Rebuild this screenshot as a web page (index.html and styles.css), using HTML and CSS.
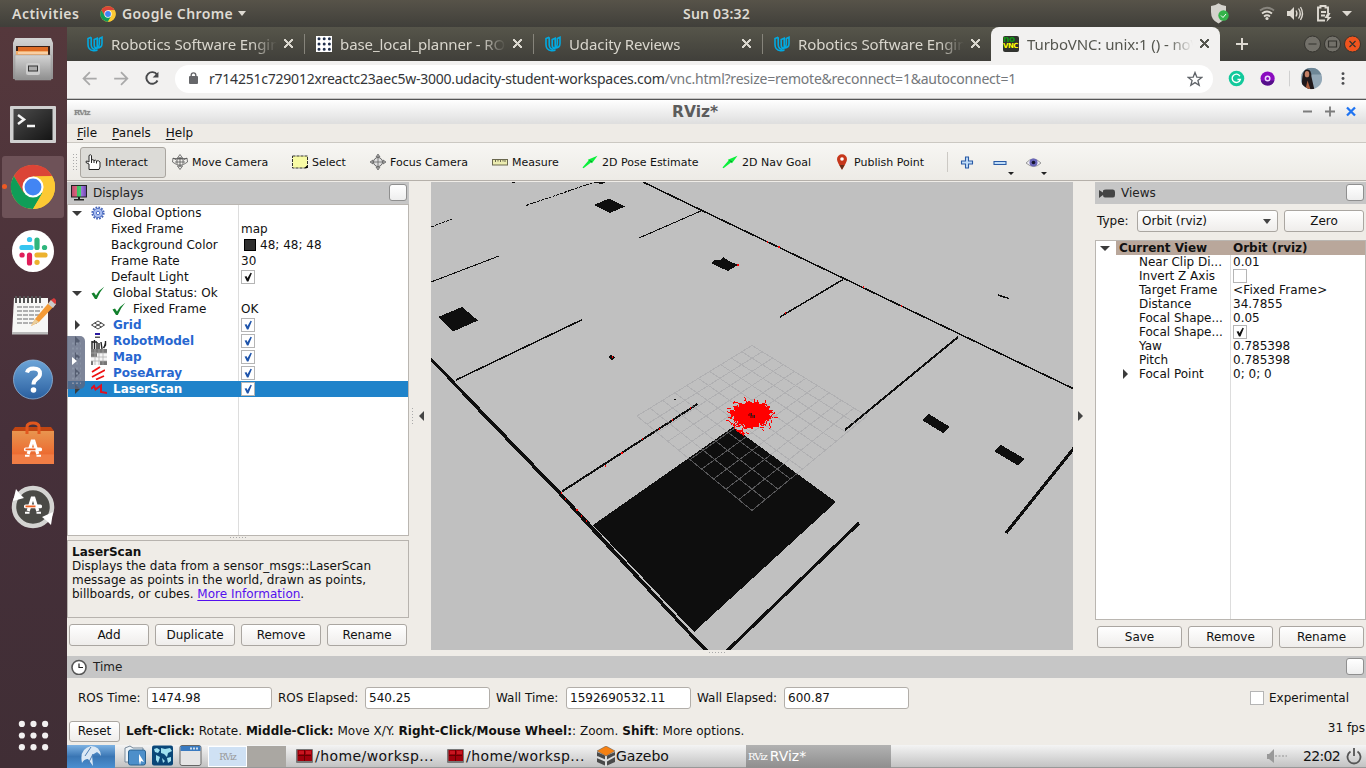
FILE: index.html
```html
<!DOCTYPE html>
<html lang="en">
<head>
<meta charset="utf-8">
<title>TurboVNC: unix:1 () - noVNC</title>
<link rel="stylesheet" href="styles.css">
</head>
<body>
<svg width="0" height="0" class="defs">
  <defs>
    <linearGradient id="steel" x1="0" y1="0" x2="0" y2="1"><stop offset="0" stop-color="#d4d4d4"/><stop offset="1" stop-color="#8e8e8e"/></linearGradient>
    <linearGradient id="orange" x1="0" y1="0" x2="0" y2="1"><stop offset="0" stop-color="#e8954f"/><stop offset=".7" stop-color="#ec6b31"/><stop offset=".72" stop-color="#f07d45"/></linearGradient>
    <linearGradient id="help" x1="0" y1="0" x2="0" y2="1"><stop offset="0" stop-color="#6da5d8"/><stop offset="1" stop-color="#2a5f9f"/></linearGradient>
    <linearGradient id="term" x1="0" y1="0" x2="1" y2="1"><stop offset="0" stop-color="#4c4c4c"/><stop offset="1" stop-color="#141414"/></linearGradient>
    <linearGradient id="rgb"><stop offset="0" stop-color="#b44c6c"/><stop offset=".33" stop-color="#e0607c"/><stop offset=".36" stop-color="#35c060"/><stop offset=".64" stop-color="#48d070"/><stop offset=".67" stop-color="#a070e0"/><stop offset="1" stop-color="#6a48a8"/></linearGradient>
    <symbol id="chrome" viewBox="0 0 48 48">
      <circle cx="24" cy="24" r="23" fill="#fcc934"/>
      <path d="M4 12.5A23 23 0 0 1 44 12.5L24 13 14 30Z" fill="#db4437"/>
      <path d="M4 12.5A23 23 0 0 0 24 47L34 30 24 33 14 29.500Z" fill="#0f9d58"/>
      <path d="M24 13H44.200A23 23 0 0 1 24 47L34 30Z" fill="#fcc934"/>
      <circle cx="24" cy="24" r="11" fill="#fff"/><circle cx="24" cy="24" r="8.800" fill="#4285f4"/>
    </symbol>
    <symbol id="udacity" viewBox="0 0 16 16">
      <path d="M4.200 1.300 1 2.600V8.500Q1 14 6.500 14.800 9.500 15 10.500 13.500M4.200 1.300V9Q4.500 13 8.500 13.500M10.200 2.300 7.200 3.500V9Q7.200 12 9.700 12.200 15 12 15 7.500V1.300L12.300 2.500V8Q12.300 10.500 10.200 11.500Z" fill="none" stroke="#02a9e0" stroke-width="1.600"/>
    </symbol>
    <symbol id="check" viewBox="0 0 14 14"><path d="M3 6.500 5.500 6.100 6.300 8.500 10 2 11.500 2.500 7.500 12.200H5.800Z" fill="currentColor"/></symbol>
    <symbol id="tick" viewBox="0 0 14 14"><path d="M.5 7.500 3 6.500 5 9.500Q8 4 13.200.8 8.500 6 5.800 13H4Z" fill="#12802c"/></symbol>
    <symbol id="camera" viewBox="0 0 16 16"><path d="M8 .5 10.500 4H5.500ZM8 15.500 5.500 12h5ZM.5 8 1 4l3.500 2M15.500 8 15 4l-3.500 2M.5 8 4.500 10.500M15.500 8 11.500 10.500M5 5h6v6H5zM1 4.500h14M3 8h10M8 3v10" fill="none" stroke="#555" stroke-width=".8"/></symbol>
    <symbol id="focus" viewBox="0 0 16 16"><circle cx="8" cy="8" r="4.500" fill="#ddd" stroke="#666"/><path d="M8 0 10 3H6ZM8 16 6 13h4ZM0 8 3 6v4ZM16 8 13 6v4ZM4 8h8M8 4v8" fill="#aaa" stroke="#666" stroke-width=".8"/></symbol>
    <symbol id="arrow" viewBox="0 0 16 14"><path d="M.5 12.500 6.500 5.500 5.800 4.800 15.500.8 10 8.300 9 7.500 1.500 13.200Z" fill="#0cf03c"/><path d="M7.500 5.500 10 7" stroke="#0a8428" stroke-width="1"/></symbol>
    <symbol id="term16" viewBox="0 0 18 15"><rect width="17" height="14" rx="1" fill="#777"/><rect x="1.500" y="1" width="14.500" height="11" fill="#a0000c"/><path d="M2 6.500h13M8.500 1v11" stroke="#600" stroke-width="1"/><path d="M3 2h5v3H3zM10 2h5v3h-5z" fill="#c81620"/></symbol>
    <symbol id="bag" viewBox="0 0 18 18"><path d="M4.200 15 8.200 2H9.800L13.800 15" fill="none" stroke="#fff" stroke-width="3.200"/><rect x="0" y="8.500" width="18" height="3.800" rx="1.600" fill="#fff"/><rect x="1.500" y="9.500" width="10" height="1.800" fill="#ee5f20"/><path d="M1 16.800h4.500M12.500 16.800h4.500" stroke="#fff" stroke-width="2"/></symbol>
  </defs>
</svg>

<div class="desktop">
  <header class="topbar">
    <span class="activities">Activities</span>
    <svg class="i16"><use href="#chrome"/></svg>
    <span class="appname">Google Chrome</span>
    <i class="caret light"></i>
    <span class="clock">Sun 03:32</span>
    <svg class="tray" viewBox="0 0 160 27">
      <path d="M16 6Q20 6 23.500 3.300 27 6 31 6V12Q31 20 23.500 23.500 16 20 16 12Z" fill="#d4d2cc"/>
      <circle cx="28.500" cy="15.500" r="5.200" fill="#35b34a"/><path d="M26 15.500 28 17.500 31 14" fill="none" stroke="#fff"/>
      <g fill="none" stroke="#dedad2" stroke-width="1.800"><path d="M65 10.500Q72 5 79 10.500" stroke="#88857e"/><path d="M67 13.500Q72 9.500 77 13.500M69 16.500Q72 14 75 16.500"/></g><circle cx="72" cy="18.500" r="1.600" fill="#dedad2"/>
      <path d="M92 11h3l4-4v13l-4-4h-3Z" fill="#dedad2"/><path d="M101 10.500q2 3 0 6M103.500 8.500q3.500 5 0 10M105.500 7q4 6.500 0 13" fill="none" stroke="#dedad2" stroke-width="1.300"/>
      <path d="M130 20.500h-7V7.500h2.500V6h5v1.500h2.500V13M126 12h5M126 15.500h4" fill="none" stroke="#dedad2" stroke-width="1.900"/><path d="m132.500 13-3 5h3l-1 4 5-5h-3l2-4Z" fill="#dedad2"/>
      <path d="M147 11h10l-5 5.200Z" fill="#dedad2"/>
    </svg>
  </header>

  <nav class="dock">
    <svg class="dk" viewBox="0 0 46 48"><path d="M5 3H41L43 8V44H3V8Z" fill="url(#steel)"/><path d="M6 11H40V22H6Z" fill="#3b2118"/><path d="M8 12h30v9H8z" fill="#de6b25"/><path d="M6 16h32v5H6z" fill="#f2ad6c"/><path d="M8 18h30" stroke="#fff1dc"/><path d="M5 20H41V45H5Z" fill="url(#steel)" stroke="#999" stroke-width=".5"/><rect x="16" y="28" width="14" height="12" rx="2" fill="#ccc"/><rect x="18.500" y="31" width="9" height="5" fill="#aaa" stroke="#333"/></svg>
    <svg class="dk" viewBox="0 0 46 48"><rect y="7" width="46" height="37" rx="1" fill="#d0d0d0"/><rect x="3.500" y="10" width="39" height="31" fill="url(#term)"/><path d="m8 16 6 4.500-6 4.500M17 27h8" fill="none" stroke="#f5f5f5" stroke-width="2.500"/></svg>
    <div class="dock-active"><svg class="dk" viewBox="0 0 46 48"><use href="#chrome" x="0" y="1" width="46" height="46"/></svg><i class="running"></i></div>
    <svg class="dk" viewBox="0 0 46 48"><circle cx="23" cy="24" r="21" fill="#fff"/><g fill="none" stroke-width="5.200" stroke-linecap="round"><path d="M12 20.500h9M19.500 12.500h.1" stroke="#36c5f0"/><path d="M27 13v7.500M34.500 20.500h.1" stroke="#2eb67d"/><path d="M27 28h8M27 35.300h.1" stroke="#ecb22e"/><path d="M19.500 28v8M12 28h.1" stroke="#e01e5a"/></g></svg>
    <svg class="dk" viewBox="0 0 46 48"><path d="M4 7 38 7 38 43H2Z" fill="#f7f7f5"/><path d="M2 41h36v2.500H2Z" fill="#bbb"/><path d="M7 16h26M7 20h23M7 24h24M7 28h18M7 32h20" stroke="#999" stroke-width="1.300" stroke-dasharray="5 1"/><path d="M6 5v7M10 5v7M14 5v7M18 5v7M22 5v7M26 5v7M30 5v7" stroke="#555" stroke-width="2"/><path d="M21 35 25 28 41 9 46 13 29 31Z" fill="#f39a35"/><path d="m38 13 3-4 5 4-3 4Z" fill="#ccc"/><path d="m41 9 3-2 3 3-2 3Z" fill="#dd3c3c"/><path d="m21 35 4-7 4 3Z" fill="#ebcf9c"/></svg>
    <svg class="dk" viewBox="0 0 46 48"><circle cx="23" cy="24.500" r="19.500" fill="url(#help)" stroke="#8fb4d8" stroke-width=".8"/><path d="M17 17.500q1-4 6.500-4 6.500 0 6.500 5.200 0 3-3.500 5.300Q23.500 26 23.500 29.500" fill="none" stroke="#fff" stroke-width="4"/><circle cx="23.500" cy="35" r="2.800" fill="#fff"/></svg>
    <svg class="dk" viewBox="0 0 46 48"><path d="M2 12 5 8H41L44 12Z" fill="#c04512"/><path d="M2 12H44V45H2Z" fill="url(#orange)"/><path d="M17 15V8q0-4 6-4t6 4v7" fill="none" stroke="#e2571e" stroke-width="3"/><use href="#bag" x="14" y="20" width="18" height="18"/></svg>
    <svg class="dk" viewBox="0 0 46 48"><circle cx="23" cy="24" r="19" fill="#4a4a46" stroke="#d4d4d2" stroke-width="4.500"/><path d="M3 18 6 6 9 10 14 15Z" fill="#fff"/><path d="M32 34 43 29 41 42 37 38Z" fill="#fff"/><use href="#bag" x="14" y="13" width="18" height="18"/></svg>
    <svg class="apps" viewBox="0 0 32 32" fill="#f2f0f0"><circle cx="4" cy="4" r="3.200"/><circle cx="16" cy="4" r="3.200"/><circle cx="28" cy="4" r="3.200"/><circle cx="4" cy="16" r="3.200"/><circle cx="16" cy="16" r="3.200"/><circle cx="28" cy="16" r="3.200"/><circle cx="4" cy="28" r="3.200"/><circle cx="16" cy="28" r="3.200"/><circle cx="28" cy="28" r="3.200"/></svg>
  </nav>

  <main class="browser">
    <div class="tabs">
      <div class="tab"><svg class="i16"><use href="#udacity"/></svg><span class="label">Robotics Software Engin</span><b class="x"></b></div>
      <div class="tab sep"><svg class="i16" viewBox="0 0 16 16"><path d="M0 0h16v16H0z" fill="#fff"/><g stroke="#22314e" stroke-width="3" stroke-linecap="round" stroke-dasharray="0 5.200"><path d="M3 2.800h12M3 8h12M3 13.200h12"/></g></svg><span class="label">base_local_planner - ROS</span><b class="x"></b></div>
      <div class="tab sep"><svg class="i16"><use href="#udacity"/></svg><span class="label">Udacity Reviews</span><b class="x"></b></div>
      <div class="tab sep"><svg class="i16"><use href="#udacity"/></svg><span class="label">Robotics Software Engin</span><b class="x"></b></div>
      <div class="tab current"><span class="vnc"><span class="no">no</span><span>VNC</span></span><span class="label">TurboVNC: unix:1 () - noV</span><b class="x"></b></div>
      <svg class="winctl" viewBox="0 0 146 34"><path d="M16 17h12M22 11v12" stroke="#dedad2" stroke-width="2"/><g stroke="#35342f"><circle cx="92.500" cy="17" r="8" fill="#73716a"/><circle cx="112.500" cy="17" r="8" fill="#73716a"/><circle cx="132.500" cy="17" r="8" fill="#f0541e"/></g><path d="M88.500 17h8M108.500 14h8v6h-8ZM129.500 14l6 6M135.500 14l-6 6" fill="none" stroke="#33322d" stroke-width="1.200"/></svg>
    </div>
    <div class="urlbar">
      <svg class="navs" viewBox="0 0 108 37"><g fill="none" stroke-width="1.800"><path d="M29 18H16M22 11.500 15.500 18l6.500 6.500M47 18h13M54 11.500l6.500 6.500-6.500 6.500" stroke="#a9a9a9"/><path d="M91 14A6 6 0 1 0 91.500 20" stroke="#48494b" stroke-width="2"/></g><path d="M92.500 11v6h-6Z" fill="#48494b"/></svg>
      <div class="omni">
        <svg class="lock" viewBox="0 0 10 13"><rect y="4" width="9" height="8" rx="1" fill="#66676a"/><path d="M2.200 5V3.200a2.300 2.300 0 0 1 4.600 0V5" fill="none" stroke="#66676a" stroke-width="1.400"/></svg>
        <span class="url">r714251c729012xreactc23aec5w-3000.udacity-student-workspaces.com<em>/vnc.html?resize=remote&amp;reconnect=1&amp;autoconnect=1</em></span>
        <svg class="star" viewBox="0 0 16 16"><path d="m8 1.500 1.800 4.600 4.900.3-3.800 3.100 1.300 4.800L8 11.600l-4.200 2.700 1.300-4.800L1.300 6.400l4.900-.3Z" fill="none" stroke="#5f6368" stroke-width="1.300"/></svg>
      </div>
      <svg class="exts" viewBox="0 0 153 37"><circle cx="22" cy="18" r="8" fill="#12c99b"/><path d="M25.500 15.500a4.300 4.300 0 1 0 .5 3.500h-3" fill="none" stroke="#fff" stroke-width="1.400"/><circle cx="54" cy="18" r="7.300" fill="#8b0cc0"/><path d="M47 20a7.300 7.300 0 0 0 14 0" fill="#55108a"/><circle cx="54" cy="18" r="2.300" fill="none" stroke="#eed8ff" stroke-width="1.500"/><path d="M76.500 10v16" stroke="#cfcfcf"/><clipPath id="face"><circle cx="99" cy="18" r="11"/></clipPath><g clip-path="url(#face)"><path d="M88 7h22v22H88z" fill="#93a8b7"/><path d="M88 7h22v7H88z" fill="#6e8797"/><path d="M89 29q0-18 4-20 6-2 6 7l3 13Z" fill="#20191b"/><ellipse cx="94.500" cy="13.500" rx="2.300" ry="3.300" fill="#c27f65"/><path d="m95 20 3 9h-5Z" fill="#a95c3c"/></g><g fill="#4b4c4f"><circle cx="131.500" cy="13" r="1.500"/><circle cx="131.500" cy="18" r="1.500"/><circle cx="131.500" cy="23" r="1.500"/></g></svg>
    </div>

    <section class="rviz">
      <div class="titlebar"><span class="mini">RViz</span><h1>RViz*</h1>
        <svg class="tctl" viewBox="0 0 60 24"><path d="M0 11.500h9M22 11.500h10M27 6.500v10" stroke="#7c7c7c" stroke-width="1.800"/><path d="m44 7.500 8 8M52 7.500l-8 8" stroke="#1f74f2" stroke-width="2.300"/></svg></div>
      <div class="menubar"><span><u>F</u>ile</span><span><u>P</u>anels</span><span><u>H</u>elp</span></div>
      <div class="toolbar">
        <i class="grip"></i>
        <div class="tool on"><svg viewBox="0 0 16 16"><path d="M4 10 1 8.500Q.5 7 2 7L4 8V1.500Q5.500 0 6.500 1.500V6Q8 5 9 6.500 10.500 5.500 11.500 7 13.500 6 15 8V13L14 15.500H4Z" fill="#fff" stroke="#222"/><path d="M6.500 6v3M9 6.500V9M11.500 7v2.500" stroke="#222"/></svg>Interact</div>
        <div class="tool move"><svg><use href="#camera"/></svg>Move Camera</div>
        <div class="tool select"><svg viewBox="0 0 16 16"><rect x=".5" y="2" width="15" height="12" fill="#f8fba5" stroke="#333" stroke-dasharray="3 1"/><path d="m15.500 11-3 3h3Z"/></svg>Select</div>
        <div class="tool foc"><svg><use href="#focus"/></svg>Focus Camera</div>
        <div class="tool meas"><svg viewBox="0 0 16 16"><rect x=".5" y="5.500" width="15" height="5.500" fill="#ececb0" stroke="#6b684f"/><path d="M3.500 5v3M6 5v2.500M8.500 5v3M11 5v2.500M13 5v3" stroke="#6b684f"/></svg>Measure</div>
        <div class="tool pose"><svg><use href="#arrow"/></svg>2D Pose Estimate</div>
        <div class="tool nav"><svg><use href="#arrow"/></svg>2D Nav Goal</div>
        <div class="tool pub"><svg viewBox="0 0 16 16"><path d="M8 15.800Q3 8 3 5.200A5 5 0 0 1 13 5.200Q13 8 8 15.800Z" fill="#c6371b"/><path d="M8 15.800 5.500 11h5Z" fill="#67301b"/><circle cx="8" cy="5" r="1.800" fill="#fff"/></svg>Publish Point</div>
        <i class="vline"></i>
        <svg class="pm" viewBox="0 0 110 37"><path d="M17.500 13h3v4h4v3h-4v4h-3v-4h-4v-3h4ZM46 17.500h12v3H46Z" fill="#c0ddf8" stroke="#2a5ba5" stroke-width="1.100"/><path d="M60 28h6l-3 3ZM93 28h6l-3 3Z" fill="#222"/><path d="M78 19q7-8 15 0-7 7-15 0Z" fill="#f0eef4" stroke="#999"/><circle cx="85.500" cy="18.500" r="4" fill="#6a66b8"/><circle cx="85.500" cy="18.500" r="1.800" fill="#15142e"/></svg>
      </div>

      <div class="middle">
        <aside class="displays">
          <h2 class="ptitle"><svg class="i16" viewBox="0 0 16 16"><rect x=".5" y=".5" width="15" height="11.500" fill="url(#rgb)" stroke="#222"/><path d="M7 12h2v2H7zM3 14h10v1.500H3z" fill="#222"/></svg>Displays<i class="pbtn"></i></h2>
          <div class="tree left">
            <div class="row"><i class="dn"></i><svg class="ic" viewBox="0 0 14 14"><circle cx="7" cy="7" r="5.600" fill="none" stroke="#4463b6" stroke-width="2" stroke-dasharray="1.700 1.200"/><circle cx="7" cy="7" r="4.600" fill="#a9bdf0" stroke="#5575c8"/><circle cx="7" cy="7" r="1.700" fill="#fff" stroke="#5575c8"/></svg><span class="k">Global Options</span></div>
            <div class="row sub"><span class="k">Fixed Frame</span><span>map</span></div>
            <div class="row sub"><span class="k">Background Color</span><span class="swatch">48; 48; 48</span></div>
            <div class="row sub"><span class="k">Frame Rate</span><span>30</span></div>
            <div class="row sub"><span class="k">Default Light</span><span class="cb"><svg><use href="#check"/></svg></span></div>
            <div class="row"><i class="dn"></i><svg class="ic"><use href="#tick"/></svg><span class="k">Global Status: Ok</span></div>
            <div class="row deep"><svg class="ic"><use href="#tick"/></svg><span class="k">Fixed Frame</span><span>OK</span></div>
            <div class="row disp"><i class="rt"></i><svg class="ic" viewBox="0 0 14 14"><path d="M.5 7 7 3l6.500 4L7 11ZM3.500 5l7 4M10.500 5l-7 4" fill="none" stroke="#444"/></svg><span class="k">Grid</span><span class="cb"><svg><use href="#check"/></svg></span></div>
            <div class="row disp"><i class="rt"></i><svg class="ic big" viewBox="0 0 16 16"><path d="M4 0h5v2H4z" fill="#2a1aa0"/><path d="M4 3.500h5v1.500H4z" fill="#555"/><path d="M1 8v8M3.500 7v9M6 9v7M8 10v6M10 9l1 7M14.500 8v4l-2 3M1 9h5" stroke="#222" stroke-width="1.400"/></svg><span class="k">RobotModel</span><span class="cb"><svg><use href="#check"/></svg></span></div>
            <div class="row disp"><i class="rt"></i><svg class="ic big" viewBox="0 0 16 16"><path d="M0 0h16v16H0z" fill="#f5f5f5"/><path d="M0 0h16v4H6v4H0zM9 12h7v4H9zM0 12h2v4H0z" fill="#777"/><path d="M0 4h16M0 8h16M0 12h16M4 0v16M8 0v16M12 0v16" stroke="#aaa" stroke-width=".7"/></svg><span class="k">Map</span><span class="cb"><svg><use href="#check"/></svg></span></div>
            <div class="row disp"><i class="rt"></i><svg class="ic" viewBox="0 0 14 14"><path d="M1 6 9 1M1 11 14 4M5 13.500l8-3.500" stroke="#ee1212" stroke-width="1.800"/></svg><span class="k">PoseArray</span><span class="cb"><svg><use href="#check"/></svg></span></div>
            <div class="row disp selrow"><i class="rt"></i><svg class="ic big" viewBox="0 0 16 16"><path d="M0 8 3 5 4.500 8.500 10 4.500 10 11 16 12" fill="none" stroke="#e01020" stroke-width="2"/></svg><span class="k">LaserScan</span><span class="cb"><svg><use href="#check"/></svg></span></div>
            <div class="handle"><i></i></div>
          </div>
          <i class="hdots"></i>
          <div class="desc"><b>LaserScan</b><br>Displays the data from a sensor_msgs::LaserScan<br>message as points in the world, drawn as points,<br>billboards, or cubes. <u>More Information</u>.</div>
          <div class="btns"><span class="btn">Add</span><span class="btn">Duplicate</span><span class="btn">Remove</span><span class="btn">Rename</span></div>
        </aside>
        <div class="split"><i class="vdots"></i><i class="lt"></i></div>
        <div class="view">
          <svg class="scene" viewBox="431 182 642 468" shape-rendering="crispEdges">
            <g fill="#0e0e0e">
              <path d="M594 205 609 198.500 625 206.500 610 213ZM711 263 714 260 720 260 723 257 729 261 738 265 733 268 728 271 719 267ZM438 317 462 307 478 320.500 453 331.500ZM922 420 929 414 950 427 943 433ZM994 451 1001 445 1025 459 1018 465.500ZM733 427 836 502 694 632 593 525ZM591 182H605V183L601 184 596 183ZM512 182h3v1h-3ZM608 357 611 355 615 357 612 360ZM673 399h3l-1 2Z"/>
              <path d="M431 357 480 408 561 492 590 523 688 629 708 650H703L592 531 559 495 478 411 431 361Z"/>
            </g>
            <g fill="none" stroke="#0e0e0e" stroke-width="1">
              <path d="M431 227 452 219M526 205.500 592 183" stroke-dasharray="3 1"/>
              <path d="M431 282 499 256M639 238 702 210.500"/>
              <path d="M998 295 1009 298.500M643 182 702 210.500 844 278.500 1073 388.500M456 380 582.500 319.500M780 317 843 279.500" stroke-width="1.500"/>
              <path d="M562 491.500 697.500 404M845 430 958 337" stroke-width="2"/>
              <path d="M1006 533 1074 448M727 651 859 523" stroke-width="3.200"/>
            </g>
            <g id="grid" fill="none" stroke="#a0a0a4" stroke-opacity=".5"></g>
            <path d="M737 265h2M778 247h2M767 242h1M785 313h1M863 287h1M901 306h1M612 357h1M605 466h1M621 453h2M642 439h1M659 429h1M672 420h1M690 408h1M561 493h1M565 499h1M576 510h2M581 516h1M586 521h1" stroke="red" stroke-width="1.200"/>
            <path d="M731 415 730 410 735 411 733 406 739 407 739 403 745 404 748 401 752 403 757 402 760 404 765 403 765 407 770 406 769 410 773 410 769 415 771 419 766 420 764 424 759 423 758 427 751 427 747 428 744 424 738 424 738 421 732 420 735 417Z" fill="red"/>
            <path id="rays" fill="none" stroke="red"/>
            <path d="M736 430 744 435M741 430 744 434" stroke="red" stroke-width="1.500"/>
            <path d="M749 413h3v2h3v3h-5v-2h-2Z" fill="#a40000"/><path d="M751 413v3M754 415v3" stroke="#222"/>
          </svg>
        </div>
        <div class="split right"><i class="gt"></i></div>
        <aside class="views">
          <h2 class="ptitle"><svg class="i16" viewBox="0 0 16 16"><path d="M0 5 4 7.500V5.500Q5 4.500 7 4.500H14Q16 4.500 16 7V10Q16 12.500 14 12.500H6Q4 12.500 4 10L0 13Z" fill="#444"/></svg>Views<i class="pbtn"></i></h2>
          <div class="typerow"><span>Type:</span><span class="combo">Orbit (rviz)<i class="caret"></i></span><span class="btn zero">Zero</span></div>
          <div class="tree props">
            <div class="vr head"><i class="dn"></i><b>Current View</b><b>Orbit (rviz)</b></div>
            <div class="vr"><span>Near Clip Di...</span><span>0.01</span></div>
            <div class="vr"><span>Invert Z Axis</span><span class="cb"></span></div>
            <div class="vr"><span>Target Frame</span><span class="wide">&lt;Fixed Frame&gt;</span></div>
            <div class="vr"><span>Distance</span><span>34.7855</span></div>
            <div class="vr"><span>Focal Shape...</span><span>0.05</span></div>
            <div class="vr"><span>Focal Shape...</span><span class="cb"><svg><use href="#check"/></svg></span></div>
            <div class="vr"><span>Yaw</span><span>0.785398</span></div>
            <div class="vr"><span>Pitch</span><span>0.785398</span></div>
            <div class="vr fp"><i class="rt"></i><span>Focal Point</span><span>0; 0; 0</span></div>
          </div>
          <div class="btns vb"><span class="btn">Save</span><span class="btn">Remove</span><span class="btn">Rename</span></div>
        </aside>
      </div>
      <div class="bottomsplit"><i class="hdots"></i></div>
      <h2 class="ptitle time"><svg class="i16" viewBox="0 0 16 16"><circle cx="8" cy="8.500" r="7" fill="#fff" stroke="#555" stroke-width="1.600"/><path d="M8 4.500v4h4" fill="none" stroke="#222" stroke-width="1.200"/></svg>Time<i class="pbtn"></i></h2>
      <div class="times">
        <label>ROS Time:</label><span class="field">1474.98</span>
        <label>ROS Elapsed:</label><span class="field">540.25</span>
        <label>Wall Time:</label><span class="field">1592690532.11</span>
        <label>Wall Elapsed:</label><span class="field">600.87</span>
        <span class="exp"><i class="cb"></i>Experimental</span>
      </div>
      <div class="status"><span class="btn reset">Reset</span><span class="hint"><b>Left-Click:</b> Rotate. <b>Middle-Click:</b> Move X/Y. <b>Right-Click/Mouse Wheel:</b>: Zoom. <b>Shift</b>: More options.</span><span class="fps">31 fps</span></div>
    </section>

    <footer class="taskbar">
      <span class="start"><svg viewBox="0 0 24 22"><path d="M3 18Q0 4 12 1q9 0 10 10-1-2-4-4l-5 3 1 11-5-7q-4 0-6 4Z" fill="#dce9f5"/><path d="m12 2-6 9M14 9 9 19" stroke="#4d7eb4" fill="none"/></svg></span>
      <svg class="quick" viewBox="0 0 80 22"><path d="M1 3 6 1 9 3H19V17H1Z" fill="#eef4f8" stroke="#789"/><rect x="4.500" y="5" width="17" height="15" rx="2" fill="#4d8fca" stroke="#28608e"/><path d="m15 9 5 8-3-1-1 4-1-4Z" fill="#fff"/><rect x="28" y=".5" width="21" height="20" rx="2" fill="#0a4778"/><path d="m30 4 3-1 3 2-2 3-3-1ZM37 3l4 1 5-1 2 3-4 2-1 4-3-3-3-1ZM32 10l4 2-2 6-2-3ZM43 13l4-1v4l-3 2ZM38 13l3 3-2 2Z" fill="#9fe0f0"/><rect x="56" y=".5" width="21" height="20" rx="2" fill="#e5e5e5" stroke="#666"/><path d="M56.500 1h20v5h-20Z" fill="#397ac0"/><path d="M66 3.500h9" stroke="#cde" stroke-width="2" stroke-dasharray="2 1"/></svg>
      <span class="pager on"><small>RViz</small></span><span class="pager"></span>
      <span class="task t1"><svg><use href="#term16"/></svg>/home/worksp...</span>
      <span class="task t2"><svg><use href="#term16"/></svg>/home/worksp...</span>
      <span class="task gz"><svg viewBox="0 0 20 20"><path d="m1 6 9 4 9-4v10l-9 4-9-4Z" fill="#4a4a4a"/><path d="m1 11 9 4 9-5M10 10v10" stroke="#ddd" fill="none" stroke-width="2"/><path d="m10 0 9 5-9 5-9-5Z" fill="#f58113" stroke="#555" stroke-width=".5"/></svg>Gazebo</span>
      <span class="task active"><small>RViz</small>RViz*</span>
      <svg class="spk" viewBox="0 0 20 16"><path d="M0 6h2l5-5v14L2 11H0Z" fill="#999"/><path d="M8 8h12" stroke="#aaa" stroke-width="1.500" stroke-dasharray="2 1.500"/></svg>
      <span class="tclock">22:02</span>
      <svg class="power" viewBox="0 0 16 18"><path d="M4.500 4.500A6.500 6.500 0 1 0 11.500 4.500M8 1v8" fill="none" stroke="#555" stroke-width="1.800"/></svg>
    </footer>
  </main>
</div>
<script src="scene.js"></script>
</body>
</html>
```

FILE: styles.css
```css
* { box-sizing: border-box; }
body { margin: 0; width: 1366px; height: 768px; overflow: hidden; font-family: "DejaVu Sans", sans-serif; font-size: 12px; color: #111; }
.defs { position: absolute; }
svg { display: block; flex: none; }
h1, h2 { margin: 0; }
.i16 { width: 16px; height: 16px; }
.desktop { display: grid; grid-template: 27px 741px / 67px 1299px; }

.topbar { grid-column: 1 / 3; display: flex; align-items: center; background: linear-gradient(#575349, #403f3a); color: #dedad2; font: 600 14px "Noto Sans", sans-serif; padding-left: 12px; white-space: nowrap; }
.activities { width: 88px; letter-spacing: .5px; }
.appname { margin-left: 6px; width: 112px; letter-spacing: .4px; }
.caret { width: 0; height: 0; border: 4.500px solid transparent; border-top: 5px solid #444; border-bottom: 0; }
.caret.light { border-top-color: #dedad2; margin-left: 4px; }
.clock { margin-left: 437px; width: 72px; letter-spacing: .2px; padding-bottom: 1px; }
.tray { width: 160px; height: 27px; margin-left: auto; margin-right: 11px; }
.tray { margin-right: 11px; }

.dock { background: linear-gradient(#55383c, #46303a 55%, #402e35); display: flex; flex-direction: column; align-items: center; gap: 16px; padding: 8px 1px 0 0; }
.dk { width: 46px; height: 48px; }
.dock-active { position: relative; width: 62px; height: 62px; margin: -7px 0; padding: 7px 8px; background: #6e5258; border-radius: 3px; }
.running { position: absolute; left: 0; top: 28px; width: 5px; height: 5px; border-radius: 3px; background: #ee5a24; }
.apps { width: 31px; height: 31px; margin-top: auto; margin-bottom: 17px; }

.browser { display: flex; flex-direction: column; background: #f2f1f0; }
.tabs { height: 34px; display: flex; background: linear-gradient(#56554a, #403f3a); color: #d9d6cd; font: 15px "Noto Sans", sans-serif; }
.tab { width: 229px; display: flex; align-items: center; padding: 0 0 1px 20px; position: relative; }
.sep::before { content: ""; position: absolute; left: 8px; top: 7px; width: 1px; height: 20px; background: #86847b; }
.label { margin-left: 8px; width: 166px; overflow: hidden; white-space: nowrap; letter-spacing: -.1px; -webkit-mask-image: linear-gradient(90deg, #000 85%, transparent); }
.x { width: 9px; height: 9px; margin-left: 7px; background: linear-gradient(45deg, transparent 43%, currentColor 43% 57%, transparent 57%), linear-gradient(-45deg, transparent 43%, currentColor 43% 57%, transparent 57%); }
.tab.current { background: #f2f1f0; color: #55564f; border-radius: 8px 8px 0 0; margin-left: 8px; padding-left: 12px; }
.vnc { width: 16px; height: 16px; background: #31332f; border-radius: 2px; color: #ff0; font: 700 7px/7px "DejaVu Sans", sans-serif; display: flex; flex-direction: column; letter-spacing: -.5px; }
.vnc .no { color: #129a12; font-size: 9px; }
.winctl { width: 146px; height: 34px; }
.urlbar { height: 38px; display: flex; align-items: center; border-bottom: 1px solid #c4c4c4; padding-bottom: 1px; }
.navs { width: 108px; height: 36px; }
.omni { width: 1038px; height: 28px; border-radius: 14px; background: #fff; display: flex; align-items: center; padding: 0 0 1px 14px; }
.lock { width: 10px; height: 13px; }
.url { margin-left: 10px; font: 14px "Noto Sans", sans-serif; color: #333538; white-space: nowrap; width: 978px; letter-spacing: -.225px; }
.url em { font-style: normal; color: #74777b; }
.star { width: 16px; height: 16px; }
.exts { width: 153px; height: 36px; }

.rviz { height: 646px; background: #efece7; border-top: 1px solid #555; display: flex; flex-direction: column; }
.titlebar { height: 24px; background: linear-gradient(#fff, #dedede); display: flex; align-items: center; }
.titlebar h1 { margin-left: 577px; width: 60px; font: 700 15.500px "DejaVu Sans", sans-serif; color: #5c5c5c; }
.mini { margin-left: 7px; width: 21px; font: 8px "DejaVu Serif", serif; color: #888; letter-spacing: -.6px; text-shadow: 0 0 1px #555; }
.tctl { width: 60px; height: 24px; margin-left: auto; margin-right: 3px; }
.menubar { height: 19px; display: flex; gap: 15px; padding-left: 10px; line-height: 18px; border-bottom: 1px solid #cbc8c2; background: #eeebe6; }
.menubar u { text-underline-offset: 2px; }
.toolbar { height: 38px; display: flex; align-items: center; padding-top: 1px; background: linear-gradient(#f7f6f3, #edebe6); border-bottom: 1px solid #b5b0aa; font-size: 11px; }
.grip { width: 6px; height: 18px; margin-left: 5px; margin-right: 2px; background: radial-gradient(circle, #aaa 35%, transparent 45%) 0 0 / 3px 3px; }
.tool { display: flex; align-items: center; gap: 4px; white-space: nowrap; height: 31px; width: 92px; }
.tool svg { width: 16px; height: 16px; }
.tool.on { width: 86px; background: #dcdbd7; border: 1px solid #aaa6a0; border-radius: 3px; padding-left: 4px; margin-right: 6px; }
.tool.move { width: 120px; }
.tool.select { width: 78px; }
.tool.foc { width: 122px; }
.tool.meas { width: 90px; }
.tool.pose { width: 140px; }
.tool.nav { width: 112px; }
.tool.pub { width: 113px; }
.vline { width: 1px; height: 20px; background: #ccc9c4; }
.pm { width: 110px; height: 37px; }

.middle { height: 472px; margin-top: 1px; display: flex; }
.displays { width: 342px; display: flex; flex-direction: column; }
.ptitle { height: 22px; flex: none; background: #c6c6c6; display: flex; align-items: center; font: 12px "DejaVu Sans", sans-serif; color: #222; gap: 6px; padding: 0 2px 0 4px; }
.pbtn { width: 18px; height: 17px; margin-left: auto; margin-bottom: 1px; border: 1px solid #8f8f8f; border-radius: 3px; background: linear-gradient(#fff, #eee); }
.tree { background: #fff; border: 1px solid #bab6b1; position: relative; }
.left { height: 332px; background: linear-gradient(90deg, transparent 170px, #ddd 170px 171px, transparent 171px) #fff; }
.row { display: grid; grid-template-columns: 16px 30px 127px 1fr; align-items: center; height: 16px; white-space: nowrap; }
.row .k { grid-column: 3; margin-left: -1px; }
.row > span:last-child:not(.k) { grid-column: 4; }
.dn, .rt, .lt, .gt { width: 0; height: 0; border: 5px solid transparent; }
.dn { border-top-color: #3b3b3b; border-bottom: 0; margin-left: 4px; }
.rt { border-left-color: #3b3b3b; border-right: 0; margin-left: 7px; }
.ic { width: 14px; height: 14px; margin-left: 7px; }
.ic.big { width: 16px; height: 16px; margin-left: 7px; }
.row.sub .k { margin-left: -3px; }
.row.deep .ic { grid-column: 2; margin-left: 28px; z-index: 1; }
.row.deep .k { margin-left: 19px; letter-spacing: .1px; }
.row.disp .k { font-weight: 700; color: #2766cf; }
.row.selrow { background: #1f83ca; }
.row.selrow .k { color: #fff; }
.cb { display: block; width: 14px; height: 14px; background: #fff; border: 1px solid #b5b5b5; color: #111; }
.cb svg { width: 12px; height: 12px; overflow: visible; }
.disp .cb { color: #1e54ab; }
.swatch::before { content: ""; display: inline-block; width: 10px; height: 10px; background: #303030; border: 1px solid #000; margin: 0 4px -1px 3px; }
.row .swatch { margin-left: 0; display: flex; align-items: center; }
.row .swatch::before { margin: 0 4px 0 3px; }
.handle { position: absolute; left: -1px; top: 131px; width: 18px; height: 53px; background: rgba(92, 103, 127, .8); border-radius: 0 5px 5px 0; }
.handle::before { content: ""; position: absolute; inset: 5px 4px; background: radial-gradient(circle, #8a93a5 30%, transparent 40%) 0 0 / 4px 5px; }
.handle i { position: absolute; left: 5px; top: 21px; border: 4px solid transparent; border-left: 5px solid #fff; border-right: 0; }
.hdots { width: 17px; height: 1px; background: repeating-linear-gradient(90deg, #aaa 0 1px, transparent 1px 3px); margin: 1px 0 2px 163px; flex: none; }
.desc { height: 78px; flex: none; border: 1px solid #b7b3ae; padding: 4px; line-height: 14px; white-space: nowrap; }
.desc u { color: #5410ee; text-underline-offset: 2px; }
.btns { display: flex; gap: 6px; padding: 6px 2px 0; }
.btn { flex: 1; height: 22px; display: flex; align-items: center; justify-content: center; border: 1px solid #aaa6a1; border-radius: 3px; background: linear-gradient(#fff, #efedeb); }
.split { width: 22px; display: flex; align-items: center; padding: 0 0 4px 3px; gap: 6px; }
.vdots { width: 1px; height: 17px; background: repeating-linear-gradient(#aaa 0 1px, transparent 1px 3px); }
.lt { border-right-color: #444; border-left: 0; }
.split.right { padding-left: 5px; }
.gt { border-left-color: #444; border-right: 0; }
.view { width: 642px; height: 468px; background: #c0c0c0; }
.scene { width: 642px; height: 468px; }
.views { width: 271px; display: flex; flex-direction: column; }
.typerow { display: flex; align-items: center; height: 36px; padding: 0 2px 2px 2px; }
.typerow > span:first-child { width: 40px; }
.combo { width: 141px; height: 22px; border: 1px solid #aaa6a1; border-radius: 3px; background: linear-gradient(#fff, #efedeb); padding: 0 6px 0 4px; display: flex; align-items: center; justify-content: space-between; margin-right: 6px; }
.props { height: 380px; background: linear-gradient(90deg, transparent 134px, #ddd 134px 135px, transparent 135px) #fff; }
.vr { height: 14px; line-height: 14px; display: grid; grid-template-columns: 94px 1fr; padding-left: 43px; white-space: nowrap; position: relative; }
.vr.head { grid-template-columns: 23px 114px 1fr; padding-left: 0; background: linear-gradient(90deg, #fff 20px, #b9a79b 20px); align-items: center; }
.vr.fp { grid-template-columns: 16px 94px 1fr; padding-left: 27px; align-items: center; }
.vr .rt { margin-left: 0; }
.wide { letter-spacing: .15px; }
.vb { padding-top: 6px; }
.bottomsplit { height: 2px; position: relative; }
.bottomsplit .hdots { position: absolute; left: 480px; top: -3px; margin-left: 162px; }
.times { display: flex; align-items: center; height: 39px; margin-bottom: 2px; padding-left: 11px; white-space: nowrap; }
.times label { width: 69px; }
.times label:nth-of-type(2) { width: 87px; }
.times label:nth-of-type(3) { width: 70px; }
.times label:nth-of-type(4) { width: 87px; }
.field { width: 125px; height: 22px; line-height: 20px; background: #fff; border: 1px solid #b2aea9; border-radius: 3px; padding-left: 3px; margin-right: 6px; }
.exp { margin-left: auto; margin-right: 17px; display: flex; align-items: center; gap: 5px; }
.status { height: 24px; display: flex; align-items: center; padding: 0 1px 0 2px; }
.reset { flex: none; width: 51px; height: 21px; }
.hint { margin-left: 6px; white-space: nowrap; letter-spacing: .025px; }
.fps { margin-left: auto; margin-bottom: 6px; }

.taskbar { height: 23px; display: flex; align-items: center; background: linear-gradient(#f4f4f4, #c3c3c3 95%, #777); font-size: 14px; white-space: nowrap; padding-bottom: 1px; }
.start { width: 48px; height: 23px; background: linear-gradient(#7db2e3, #3a76b4 50%, #4b8fd0); display: flex; justify-content: center; }
.start svg { width: 24px; height: 22px; }
.quick { width: 80px; height: 22px; margin-left: 9px; }
.pager { width: 39px; height: 21px; background: #aaa7a2; }
.pager.on { background: #cfe1f4; border: 1px solid #fff; margin-left: 4px; text-align: center; line-height: 16px; }
small { font: 9px "DejaVu Serif", serif; color: #999; letter-spacing: -1px; }
.task { display: flex; align-items: center; height: 23px; }
.task svg { width: 18px; height: 15px; margin-right: 1px; }
.t1 { margin-left: 10px; width: 151px; letter-spacing: .42px; }
.t2 { width: 149px; letter-spacing: .42px; }
.gz { width: 150px; }
.task.gz svg { width: 20px; height: 20px; margin-right: 0; }
.task.active { width: 145px; background: linear-gradient(#b2b2b2, #8e8e8e); color: #fff; padding-left: 2px; }
.active small { color: #fff; font-size: 10px; margin-right: 3px; }
.spk { width: 20px; height: 16px; margin-left: auto; margin-right: 16px; }
.tclock { width: 43px; letter-spacing: -.7px; }
.power { width: 16px; height: 18px; margin-right: 4px; }
```

FILE: scene.js
```js
// Ground grid: a 10 x 10 plane seen in perspective.
const top_ = [752, 345.5], right = [867, 416], bottom = [752, 510.5], left = [637, 416];

function planeToScreen(a, b, c, d) {
  const dx1 = b[0] - c[0], dx2 = d[0] - c[0], dx3 = a[0] - b[0] + c[0] - d[0];
  const dy1 = b[1] - c[1], dy2 = d[1] - c[1], dy3 = a[1] - b[1] + c[1] - d[1];
  const det = dx1 * dy2 - dx2 * dy1;
  const g = (dx3 * dy2 - dx2 * dy3) / det, h = (dx1 * dy3 - dx3 * dy1) / det;
  return (u, v) => {
    const w = g * u + h * v + 1;
    return [
      ((b[0] - a[0] + g * b[0]) * u + (d[0] - a[0] + h * d[0]) * v + a[0]) / w,
      ((b[1] - a[1] + g * b[1]) * u + (d[1] - a[1] + h * d[1]) * v + a[1]) / w
    ].map(n => n.toFixed(1)).join(" ");
  };
}

const project = planeToScreen(top_, right, bottom, left);
let d = "";
for (let i = 0; i <= 10; i++) {
  const t = i / 10;
  d += `M${project(t, 0)}L${project(t, 1)}M${project(0, t)}L${project(1, t)}`;
}
const grid = document.createElementNS("http://www.w3.org/2000/svg", "path");
grid.setAttribute("d", d);
document.getElementById("grid").append(grid);

// Pose arrows scattered round the robot.
let seed = 11;
const rnd = () => (seed = (seed * 16807) % 2147483647) / 2147483647;
let rays = "";
for (let i = 0; i < 130; i++) {
  const a = rnd() * Math.PI * 2, r = 0.7 + rnd() * rnd() * 0.55, b = rnd() * Math.PI * 2;
  const x = 751 + Math.cos(a) * 22 * r, y = 416 + Math.sin(a) * 16 * r;
  rays += `M${x.toFixed(1)} ${y.toFixed(1)}l${(Math.cos(b) * 4).toFixed(1)} ${(Math.sin(b) * 3).toFixed(1)}`;
}
document.getElementById("rays").setAttribute("d", rays);
```
